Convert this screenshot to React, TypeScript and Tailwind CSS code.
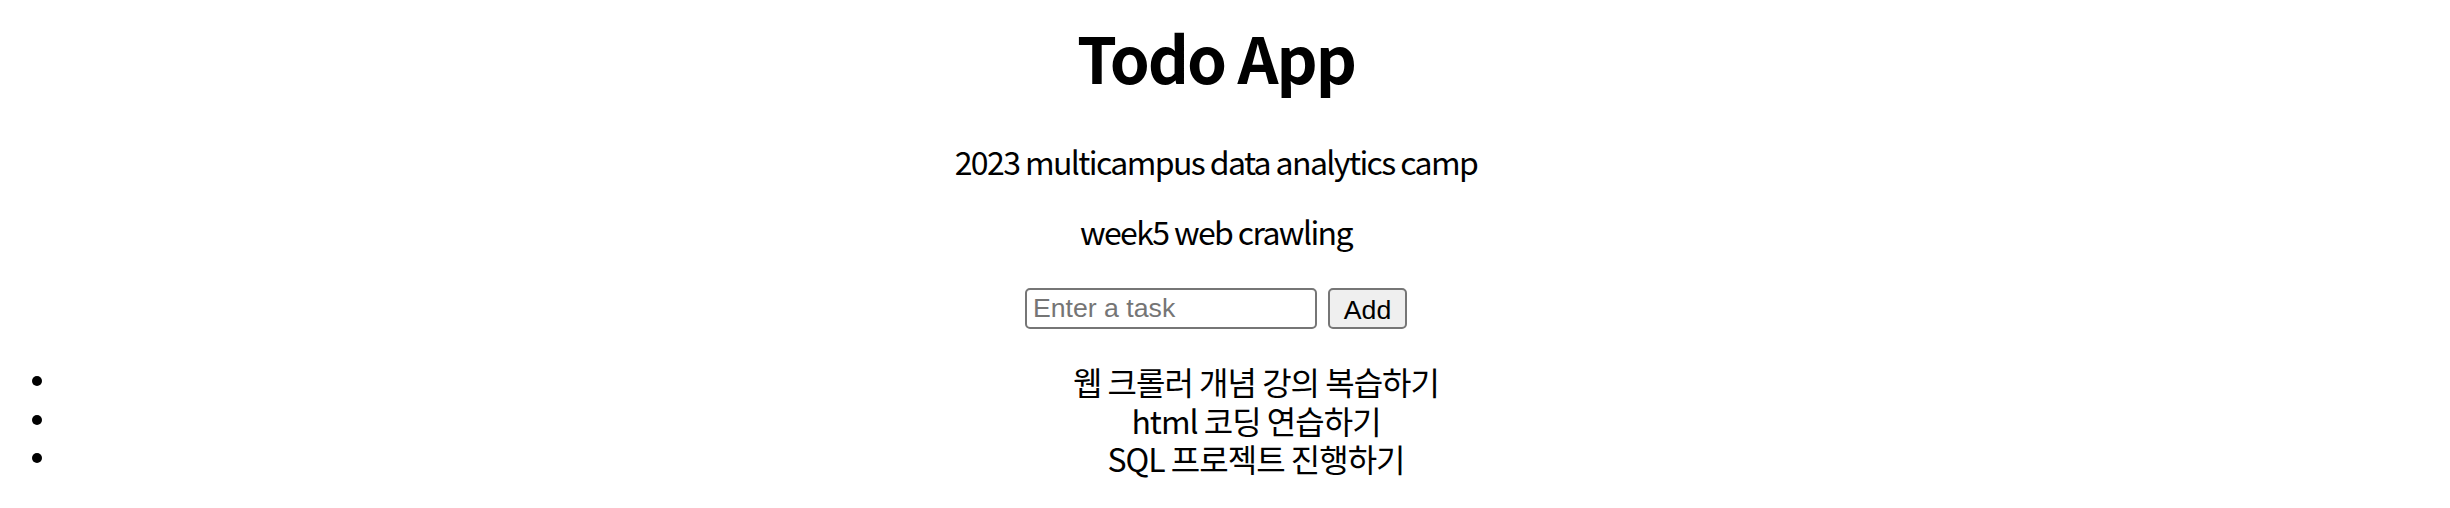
import { useState } from "react";

const initialTodos = [
  "웹 크롤러 개념 강의 복습하기",
  "html 코딩 연습하기",
  "SQL 프로젝트 진행하기",
];

export default function App() {
  const [task, setTask] = useState("");
  const [todos, setTodos] = useState(initialTodos);

  function add() {
    const t = task.trim();
    if (!t) return;
    setTodos((list) => [...list, t]);
    setTask("");
  }

  return (
    <div className="min-h-[508px] bg-white pr-[18px] text-black">
      <div className="m-4 text-center font-['Noto_Sans_CJK_KR','Noto_Sans',sans-serif] text-[32px]">
        <h1 className="mt-0 text-[64px] font-bold leading-[80px] tracking-[-2px]">Todo App</h1>
        <p className="mt-[43px] leading-[44px] tracking-[-1.6px]">2023 multicampus data analytics camp</p>
        <p className="mt-[26px] leading-[44px] tracking-[-1.6px]">week5 web crawling</p>

        <div className="mt-[35px] flex items-center justify-center gap-[11px]">
          <input
            type="text"
            value={task}
            placeholder="Enter a task"
            onChange={(e) => setTask(e.target.value)}
            onKeyDown={(e) => e.key === "Enter" && add()}
            className="h-[41px] w-[292px] rounded-[5px] border-2 border-[#767676] bg-white px-[6px] font-['Liberation_Sans',Arial,sans-serif] text-[26.67px] text-black outline-none placeholder:text-[#757575]"
          />
          <button
            type="button"
            onClick={add}
            className="h-[41px] w-[79px] rounded-[5px] border-2 border-[#767676] bg-[#efefef] font-['Liberation_Sans',Arial,sans-serif] text-[26.67px] text-black"
          >
            Add
          </button>
        </div>

        <ul className="mt-[33px]">
          {todos.map((t, i) => (
            <li key={i} className="flex items-center pl-4 leading-[38.5px]">
              <span className="h-[10px] w-[10px] shrink-0 rounded-full bg-black" />
              <span className="ml-[54px] flex-1 tracking-[-1px]">{t}</span>
            </li>
          ))}
        </ul>
      </div>
    </div>
  );
}
